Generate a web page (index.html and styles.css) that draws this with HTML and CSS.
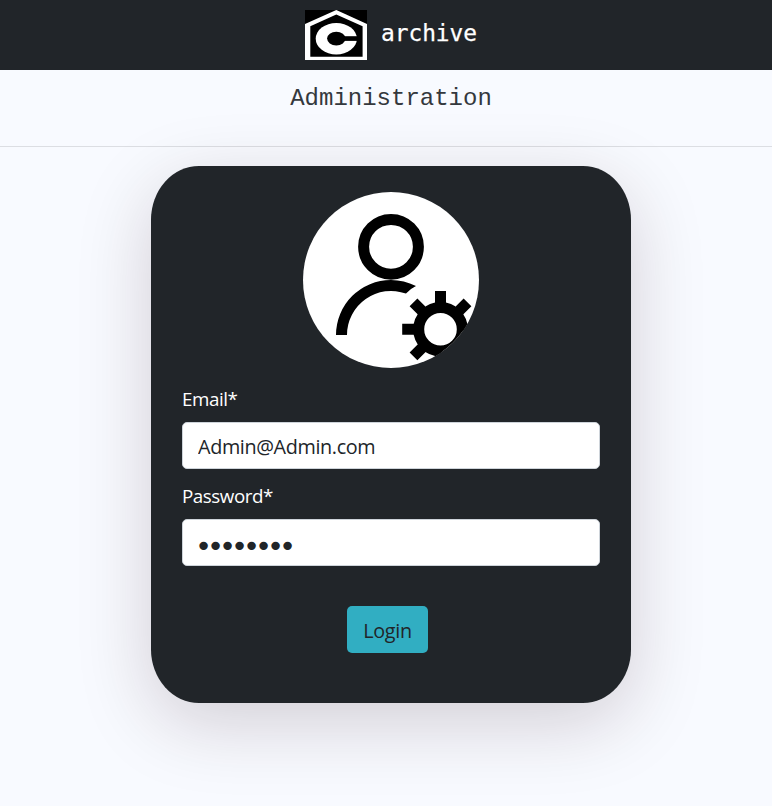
FILE: index.html
```html
<!DOCTYPE html>
<html lang="en">
<head>
<meta charset="utf-8">
<title>archive</title>
<link rel="stylesheet" href="styles.css">
</head>
<body>
<div class="page">
  <header class="navbar">
    <svg class="logo" viewBox="0 0 62 50" aria-hidden="true">
      <rect width="62" height="50" fill="#000"/>
      <path fill="#fff" fill-rule="evenodd" d="M31.3 0 62 14V50H0V14ZM31.3 4.6 5.3 16.2V46.7H57.6V16.2Z"/>
      <ellipse cx="31.3" cy="28.7" rx="20.6" ry="15.7" fill="#fff"/>
      <ellipse cx="31.3" cy="28.6" rx="9.2" ry="6.8" fill="#000"/>
      <path d="M37 26.2H53V30.9H37Z"/>
    </svg>
    <span class="brand">archive</span>
  </header>
  <div class="subhead"><h1>Administration</h1></div>
  <main>
    <form class="card">
      <svg class="avatar" viewBox="0 0 176 176" aria-hidden="true">
        <clipPath id="disc"><circle cx="88" cy="88" r="88"/></clipPath>
        <circle cx="88" cy="88" r="88" fill="#fff"/>
        <g clip-path="url(#disc)">
          <circle cx="88" cy="54.8" r="27.4" fill="none" stroke="#000" stroke-width="11"/>
          <path d="M33 143A55 55 0 0 1 88 88Q101 88 113 94.1Q107 97 103 101.6A44 44 0 0 0 44 143Z"/>
          <g transform="translate(137.5 137.3)" fill="none" stroke="#000" stroke-width="11">
            <circle r="21.8"/>
            <path d="M0-22V-38.3M0 22V38.3M-22 0H-38.3M22 0H38.3M-15-15-27-27M15-15 27-27M-15 15-27 27M15 15 27 27"/>
          </g>
        </g>
      </svg>
      <label for="email">Email*</label>
      <input id="email" class="email" type="text" value="Admin@Admin.com">
      <label for="password">Password*</label>
      <input id="password" class="password" type="password" value="password">
      <button type="button">Login</button>
    </form>
  </main>
</div>
</body>
</html>
```
FILE: styles.css
```css
* { box-sizing: border-box; }
html { overflow: hidden; }
body {
  margin: 0;
  background: #f8faff;
  color: #212529;
  font-family: "Open Sans", "Noto Sans", sans-serif;
}
.page { width: 782px; height: 806px; }
.navbar {
  display: flex;
  align-items: center;
  justify-content: center;
  gap: 14px;
  height: 70px;
  background: #212529;
  color: #fff;
}
.logo { width: 62px; height: 50px; }
.brand {
  font: 22.8px/30px "DejaVu Sans Mono", monospace;
  margin-top: -4px;
  -webkit-text-stroke: .25px #fff;
}
.subhead { height: 77px; border-bottom: 1px solid #dcdee3; }
h1 {
  margin: 0;
  padding-top: 14px;
  text-align: center;
  color: #34383d;
  font: 400 24px/29px "Liberation Mono", monospace;
}
.card {
  display: flex;
  flex-direction: column;
  width: 480px;
  height: 537px;
  margin: 19px auto 0;
  padding: 26px 31px;
  border-radius: 10%;
  background: #212529;
  box-shadow: 0 20px 75px rgba(45, 10, 20, .18);
}
.avatar { width: 176px; height: 176px; align-self: center; margin-bottom: 16px; }
label { height: 30px; margin-bottom: 8px; color: #fff; font-size: 18.8px; line-height: 30px; letter-spacing: -.45px; }
input {
  height: 47px;
  margin: 0 0 12px;
  padding: 4px 15px 2px;
  border: 1px solid #ced4da;
  border-radius: 5px;
  background: #fff;
  color: #212529;
  font: 19.8px "Open Sans", sans-serif;
  letter-spacing: -.36px;
}
.password {
  margin-bottom: 40px;
  padding: 7px 12px 0;
  font: 29px "DejaVu Sans", sans-serif;
  letter-spacing: -5.1px;
}
button {
  width: 81px;
  height: 47px;
  margin-left: 165px;
  padding: 1px 0 0;
  border: 0;
  border-radius: 5px;
  background: #31aec2;
  color: #212529;
  font: 19.8px "Open Sans", sans-serif;
  letter-spacing: -.3px;
}
```
